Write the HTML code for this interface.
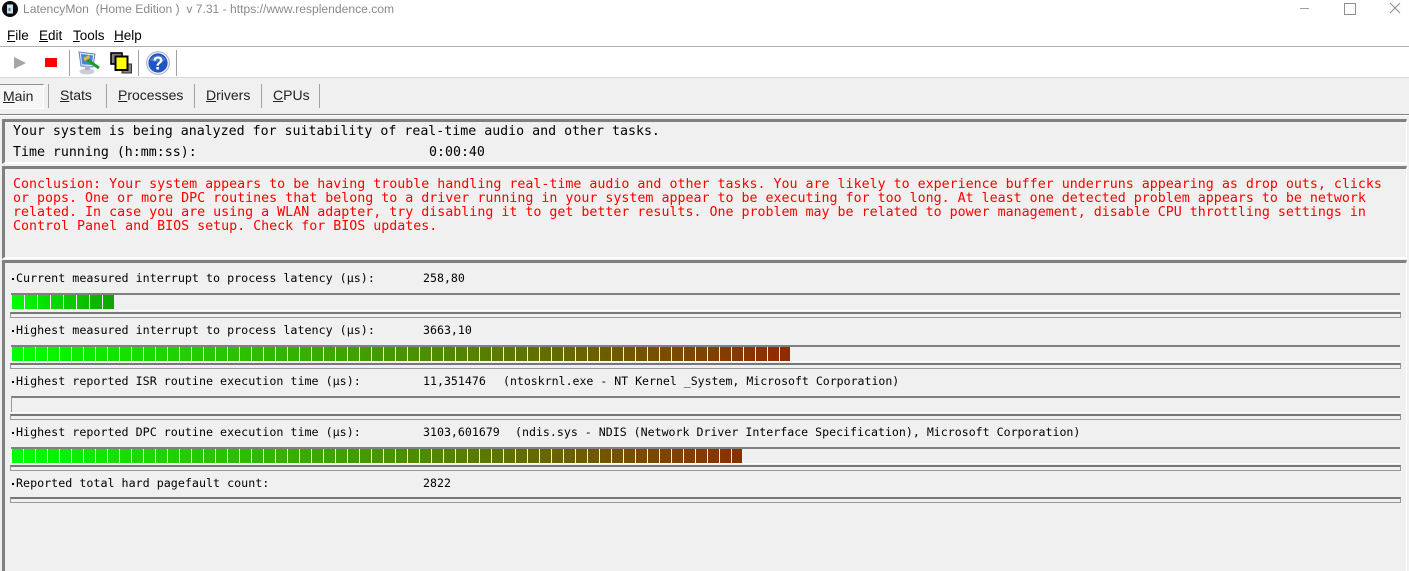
<!DOCTYPE html>
<html><head><meta charset="utf-8">
<style>
html,body{margin:0;padding:0;width:1409px;height:571px;overflow:hidden;background:#f0f0f0;}
#w{position:absolute;left:0;top:0;width:1409px;height:571px;overflow:hidden;}
div,span,svg{position:absolute;}
u{text-decoration:underline;}
.t{white-space:pre;}
.ui{font:13.5px/16px "Liberation Sans",sans-serif;color:#000;}
.m{font:13.28px/14px "DejaVu Sans Mono","Liberation Mono",monospace;color:#000;white-space:pre;}
.s{font:11.69px/14px "DejaVu Sans Mono","Liberation Mono",monospace;color:#000;white-space:pre;}
.v{font-size:11.6px;}
.r{color:#f00;left:13px;font-size:13.3px;}
.frame{box-sizing:border-box;border-left:3px solid #808080;border-top:3px solid #808080;border-right:1px solid #fff;border-bottom:2px solid #fff;left:2px;width:1405px;}
.track{left:11px;width:1389px;height:3px;border-top:2px solid #808080;box-sizing:content-box;background:#f0f0f0;}
.under{left:10px;width:1391px;height:6px;box-sizing:border-box;border:1px solid #999;border-top:2px solid #777;background:#f0f0f0;}
.bar{left:12px;height:14px;}
.gap{left:0;top:0;width:100%;height:100%;}
.sep{width:1px;background:#a0a0a0;}
</style></head><body><div id="w">
<div style="left:0;top:0;width:1409px;height:47px;background:#fff"></div>
<div style="left:0;top:46px;width:1409px;height:1px;background:#b0b0b0"></div>
<div style="left:0;top:47px;width:1409px;height:30px;background:#fff"></div>
<div style="left:0;top:77px;width:1409px;height:1px;background:#d8d8d8"></div>

<svg style="left:2px;top:1px" width="16" height="16" viewBox="0 0 16 16"><circle cx="8" cy="8" r="8" fill="#0a0a0a"/><rect x="5" y="3.5" width="6" height="9" fill="#cfe0ea"/><rect x="6.5" y="7" width="2" height="3" fill="#4a7d9c"/></svg>
<div class="t" style="left:23px;top:1px;font:12.1px/16px 'Liberation Sans',sans-serif;color:#8a8a8a">LatencyMon  (Home Edition )  v 7.31 - https://www.resplendence.com</div>
<div style="left:1300px;top:8px;width:9px;height:1px;background:#a0a0a0"></div>
<div style="left:1344px;top:3px;width:10px;height:10px;border:1px solid #909090"></div>
<svg style="left:1389px;top:2px" width="12" height="12" viewBox="0 0 12 12"><path d="M1 1L11 11M11 1L1 11" stroke="#8a8a8a" stroke-width="1"/></svg>

<div class="ui t" style="left:7px;top:28px"><u>F</u>ile</div>
<div class="ui t" style="left:39px;top:28px"><u>E</u>dit</div>
<div class="ui t" style="left:73px;top:28px"><u>T</u>ools</div>
<div class="ui t" style="left:114px;top:28px"><u>H</u>elp</div>

<svg style="left:14px;top:57px" width="13" height="12" viewBox="0 0 13 12"><path d="M0 0L12 6L0 12Z" fill="#a6a6a6"/></svg>
<div style="left:45px;top:58px;width:12px;height:9px;background:#f00"></div>
<div class="sep" style="left:69px;top:50px;height:26px"></div>
<svg style="left:77px;top:50px" width="24" height="26" viewBox="0 0 24 26"><path d="M2 2L18 4L16 17L4 16Z" fill="#dfe7f5" stroke="#5f84c0" stroke-width="1"/><path d="M4 4L16 5.5L14.8 15L5.2 14.2Z" fill="#3f86d8"/><ellipse cx="10" cy="21.5" rx="7.5" ry="3" fill="#c9cdde"/><rect x="8" y="16" width="5" height="4" fill="#aab0c8"/><path d="M9 9L22 18" stroke="#1f9a2a" stroke-width="3"/><path d="M6 8L12 5L13 8L8 11Z" fill="#e8b830"/></svg>
<svg style="left:110px;top:51px" width="23" height="23" viewBox="0 0 23 23"><defs><pattern id="d" width="2" height="2" patternUnits="userSpaceOnUse"><rect width="2" height="2" fill="#ffff00"/><rect width="1" height="1" fill="#f4f4c0"/></pattern></defs><rect x="1" y="2" width="11" height="11" fill="#808080" stroke="#000" stroke-width="1.6"/><rect x="12" y="13" width="9.5" height="9" fill="#808080" stroke="#333" stroke-width="1"/><rect x="5.5" y="5.5" width="12" height="13.5" fill="url(#d)" stroke="#000" stroke-width="2"/></svg>
<div class="sep" style="left:138px;top:50px;height:26px"></div>
<svg style="left:146px;top:51px" width="24" height="24" viewBox="0 0 24 24"><circle cx="12" cy="12" r="11.4" fill="#eef0f6" stroke="#a8afbf" stroke-width="1"/><circle cx="12" cy="12" r="9.6" fill="#1f55c0"/><path d="M4 9a8.5 7 0 0 1 16 0a10 5 0 0 1-16 0z" fill="#5f8fe0" opacity=".6"/><text x="12" y="18.5" text-anchor="middle" font-family="Liberation Sans" font-size="18" font-weight="700" fill="#fff">?</text></svg>
<div class="sep" style="left:176px;top:50px;height:26px"></div>

<div style="left:0;top:84px;width:43px;height:23px;background:#f6f6f6;border-top:1px solid #909090;border-right:1px solid #fff;border-bottom:1px solid #fff"></div>
<div class="ui t" style="left:3px;top:88px;font-size:14px;color:#222"><u>M</u>ain</div>
<div class="sep" style="left:48px;top:84px;height:24px"></div>
<div class="ui t" style="left:60px;top:87px;font-size:14px;color:#222"><u>S</u>tats</div>
<div class="sep" style="left:106px;top:84px;height:24px"></div>
<div class="ui t" style="left:118px;top:87px;font-size:14px;color:#222"><u>P</u>rocesses</div>
<div class="sep" style="left:194px;top:84px;height:24px"></div>
<div class="ui t" style="left:206px;top:87px;font-size:14px;color:#222"><u>D</u>rivers</div>
<div class="sep" style="left:261px;top:84px;height:24px"></div>
<div class="ui t" style="left:273px;top:87px;font-size:14px;color:#222"><u>C</u>PUs</div>
<div class="sep" style="left:319px;top:84px;height:24px"></div>

<div style="left:0;top:114px;width:1409px;height:1px;background:#808080"></div>
<div style="left:0;top:115px;width:1409px;height:1px;background:#fff"></div>

<div class="frame" style="top:119px;height:45px"></div>
<div class="frame" style="top:166px;height:93px"></div>
<div class="frame" style="top:260px;height:320px"></div>

<div class="m" style="left:13px;top:125px">Your system is being analyzed for suitability of real-time audio and other tasks.</div>
<div class="m" style="left:13px;top:146px">Time running (h:mm:ss):</div>
<div class="m" style="left:429px;top:146px">0:00:40</div>

<div class="m r" style="top:178px">Conclusion: Your system appears to be having trouble handling real-time audio and other tasks. You are likely to experience buffer underruns appearing as drop outs, clicks</div>
<div class="m r" style="top:192px">or pops. One or more DPC routines that belong to a driver running in your system appear to be executing for too long. At least one detected problem appears to be network</div>
<div class="m r" style="top:206px">related. In case you are using a WLAN adapter, try disabling it to get better results. One problem may be related to power management, disable CPU throttling settings in</div>
<div class="m r" style="top:220px">Control Panel and BIOS setup. Check for BIOS updates.</div>

<div class="s" style="left:16px;top:271px">Current measured interrupt to process latency (µs):</div>
<div class="s v" style="left:423px;top:271px">258,80</div>
<div style="left:12px;top:278px;width:2px;height:2px;background:#000"></div>
<div class="track" style="top:293px;height:15px;background:#f0f0f0"></div>
<div class="bar" style="top:295px;width:102px;background:linear-gradient(90deg,#00ff00,#10a400)"><div class="gap" style="background:repeating-linear-gradient(90deg,transparent 0 12px,#f0f0f0 12px 13px)"></div></div>
<div style="left:11px;top:310px;width:1389px;height:1px;background:#fff"></div>
<div class="under" style="left:10px;top:312px"></div>

<div class="s" style="left:16px;top:323px">Highest measured interrupt to process latency (µs):</div>
<div class="s v" style="left:423px;top:323px">3663,10</div>
<div style="left:12px;top:330px;width:2px;height:2px;background:#000"></div>
<div class="track" style="top:345px;height:15px"></div>
<div class="bar" style="top:347px;width:778px;background:linear-gradient(90deg,#00ff00,#902a00)"><div class="gap" style="background:repeating-linear-gradient(90deg,transparent 0 11px,#f0f0f0 11px 12px)"></div></div>
<div style="left:11px;top:361px;width:1389px;height:1px;background:#fff"></div>
<div class="under" style="left:10px;top:363px"></div>

<div class="s" style="left:16px;top:374px">Highest reported ISR routine execution time (µs):</div>
<div class="s v" style="left:423px;top:374px">11,351476</div>
<div class="s" style="left:503px;top:374px;font-size:11.55px">(ntoskrnl.exe - NT Kernel _System, Microsoft Corporation)</div>
<div style="left:12px;top:381px;width:2px;height:2px;background:#000"></div>
<div class="track" style="top:396px;height:15px;border-left:1px solid #999;width:1388px"></div>
<div style="left:11px;top:412px;width:1389px;height:1px;background:#fff"></div>
<div class="under" style="left:10px;top:414px"></div>

<div class="s" style="left:16px;top:425px">Highest reported DPC routine execution time (µs):</div>
<div class="s v" style="left:423px;top:425px">3103,601679</div>
<div class="s" style="left:515px;top:425px;font-size:11.6px">(ndis.sys - NDIS (Network Driver Interface Specification), Microsoft Corporation)</div>
<div style="left:12px;top:432px;width:2px;height:2px;background:#000"></div>
<div class="track" style="top:447px;height:15px"></div>
<div class="bar" style="top:449px;width:730px;background:linear-gradient(90deg,#00ff00,#8c2e00)"><div class="gap" style="background:repeating-linear-gradient(90deg,transparent 0 11px,#f0f0f0 11px 12px)"></div></div>
<div style="left:11px;top:463px;width:1389px;height:1px;background:#fff"></div>
<div class="under" style="left:10px;top:465px"></div>

<div class="s" style="left:16px;top:476px">Reported total hard pagefault count:</div>
<div class="s v" style="left:423px;top:476px">2822</div>
<div style="left:12px;top:483px;width:2px;height:2px;background:#000"></div>
<div class="under" style="left:10px;top:497px"></div>
</div></body></html>
